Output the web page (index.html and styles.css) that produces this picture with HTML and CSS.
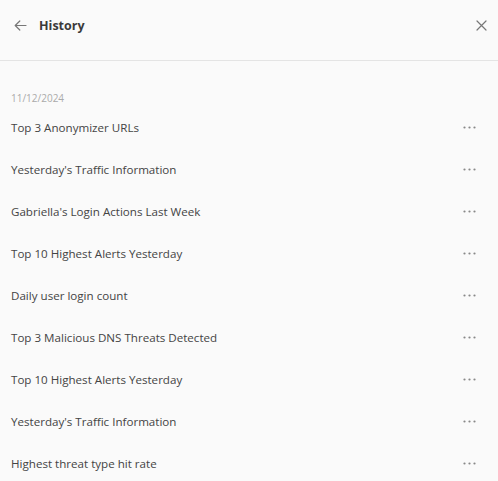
FILE: index.html
```html
<!DOCTYPE html>
<html>
<head>
<title>History</title>
<link rel="stylesheet" href="styles.css">
</head>
<body>

<div class="panel">
  <div class="panel-header">
    <button type="button" class="icon-btn back" aria-label="Back">
      <svg width="13" height="11" viewBox="0 0 13 11" fill="none" stroke="#777" stroke-width="1.2" stroke-linecap="round" stroke-linejoin="round">
        <path d="M12 5.5H1.2M5.8 1L1.2 5.5L5.8 10"/>
      </svg>
    </button>
    <span class="title">History</span>
    <button type="button" class="icon-btn close" aria-label="Close">
      <svg width="11" height="11" viewBox="0 0 11 11" fill="none" stroke="#777" stroke-width="1.2" stroke-linecap="round">
        <path d="M1 1L10 10M10 1L1 10"/>
      </svg>
    </button>
  </div>

  <div class="history">
    <div class="date">11/12/2024</div>
    <ul class="items">
      <li><span>Top 3 Anonymizer URLs</span><svg class="more" width="13" height="3" viewBox="0 0 13 3"><circle cx="1.5" cy="1.5" r="1.1"/><circle cx="6.5" cy="1.5" r="1.1"/><circle cx="11.5" cy="1.5" r="1.1"/></svg></li>
      <li><span>Yesterday's Traffic Information</span><svg class="more" width="13" height="3" viewBox="0 0 13 3"><circle cx="1.5" cy="1.5" r="1.1"/><circle cx="6.5" cy="1.5" r="1.1"/><circle cx="11.5" cy="1.5" r="1.1"/></svg></li>
      <li><span>Gabriella's Login Actions Last Week</span><svg class="more" width="13" height="3" viewBox="0 0 13 3"><circle cx="1.5" cy="1.5" r="1.1"/><circle cx="6.5" cy="1.5" r="1.1"/><circle cx="11.5" cy="1.5" r="1.1"/></svg></li>
      <li><span>Top 10 Highest Alerts Yesterday</span><svg class="more" width="13" height="3" viewBox="0 0 13 3"><circle cx="1.5" cy="1.5" r="1.1"/><circle cx="6.5" cy="1.5" r="1.1"/><circle cx="11.5" cy="1.5" r="1.1"/></svg></li>
      <li><span>Daily user login count</span><svg class="more" width="13" height="3" viewBox="0 0 13 3"><circle cx="1.5" cy="1.5" r="1.1"/><circle cx="6.5" cy="1.5" r="1.1"/><circle cx="11.5" cy="1.5" r="1.1"/></svg></li>
      <li><span>Top 3 Malicious DNS Threats Detected</span><svg class="more" width="13" height="3" viewBox="0 0 13 3"><circle cx="1.5" cy="1.5" r="1.1"/><circle cx="6.5" cy="1.5" r="1.1"/><circle cx="11.5" cy="1.5" r="1.1"/></svg></li>
      <li><span>Top 10 Highest Alerts Yesterday</span><svg class="more" width="13" height="3" viewBox="0 0 13 3"><circle cx="1.5" cy="1.5" r="1.1"/><circle cx="6.5" cy="1.5" r="1.1"/><circle cx="11.5" cy="1.5" r="1.1"/></svg></li>
      <li><span>Yesterday's Traffic Information</span><svg class="more" width="13" height="3" viewBox="0 0 13 3"><circle cx="1.5" cy="1.5" r="1.1"/><circle cx="6.5" cy="1.5" r="1.1"/><circle cx="11.5" cy="1.5" r="1.1"/></svg></li>
      <li><span>Highest threat type hit rate</span><svg class="more" width="13" height="3" viewBox="0 0 13 3"><circle cx="1.5" cy="1.5" r="1.1"/><circle cx="6.5" cy="1.5" r="1.1"/><circle cx="11.5" cy="1.5" r="1.1"/></svg></li>
    </ul>
  </div>
</div>

</body>
</html>
```

FILE: styles.css
```css
html, body {
  margin:0;
  padding:0;
  background:#fafafa;
}
body {
  font-family:"Open Sans", "Noto Sans", sans-serif;
  color:#444;
  height:481px;
  overflow:hidden;
}
.panel {
  width:498px;
}
.panel-header {
  display:flex;
  align-items:center;
  height:61px;
  box-sizing:border-box;
  padding:0 11px 10px 14px;
  border-bottom:1px solid #e4e4e4;
}
.icon-btn {
  border:0;
  background:none;
  padding:0;
  display:flex;
  cursor:pointer;
}
.title {
  margin-left:12px;
  font-size:12.5px;
  font-weight:700;
  color:#3a3a3a;
}
.close {
  margin-left:auto;
}
.history {
  padding:29px 22px 0 11px;
}
.date {
  font-size:10px;
  line-height:16px;
  color:#aaa;
}
.items {
  list-style:none;
  margin:0;
  padding:0;
}
.items li {
  display:flex;
  align-items:center;
  justify-content:space-between;
  height:42px;
  font-size:11.6px;
}
.more {
  fill:#888;
}
```
